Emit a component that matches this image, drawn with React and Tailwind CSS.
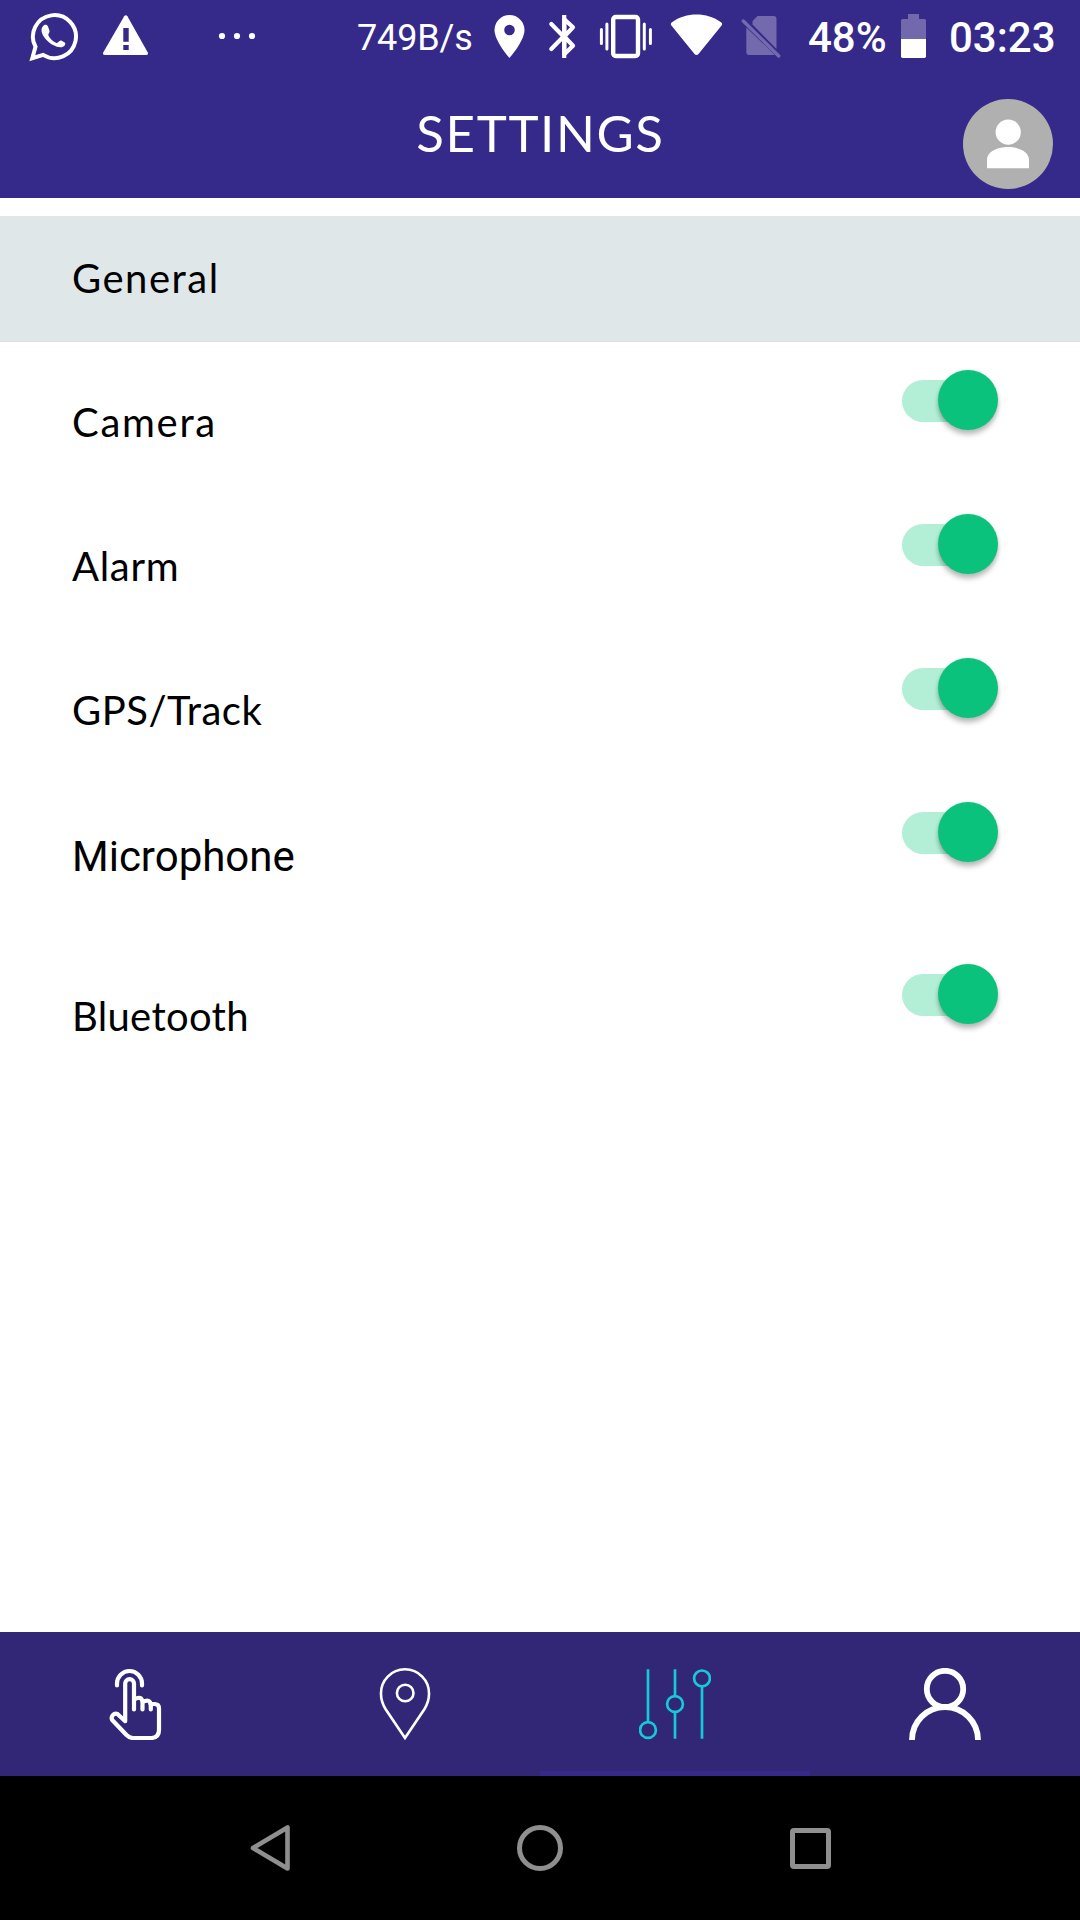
const ROWS = [
  { label: "Camera", tracking: "tracking-[1.7px]" },
  { label: "Alarm", tracking: "tracking-[0.7px]" },
  { label: "GPS/Track", tracking: "tracking-[0.5px]" },
  { label: "Microphone", roboto: true, tall: true },
  { label: "Bluetooth", tracking: "tracking-[0.3px]" },
];

function StatusBar() {
  return (
    <div className="flex h-[72px] items-center font-['Roboto',sans-serif] text-white">
      <svg className="ml-[28px] h-[72px] w-[54px]" viewBox="28.5 0 54 72" fill="none">
        <path d="M32.8 58.2 L36 46.8 A21.5 21.5 0 1 1 43.6 54.9 Z" stroke="#fff" strokeWidth="4" />
        <path fill="#fff" d="M43.5 26.2C45 24.4 47.6 24.3 48.5 26.6L50 30.8C50.6 32.8 48.3 33.8 48.8 35.3C50.5 38.9 53.6 41.8 57 43C58.8 43.4 59.5 40 61.7 40.6L65.2 42.4C66.9 43.6 64.8 47.3 60.8 47.3C52 46.9 42 37 42 30.3C42 28.5 42.5 27.2 43.5 26.2Z" />
      </svg>
      <svg className="ml-[18px] h-[72px] w-[52px]" viewBox="100 0 52 72">
        <path fill="#fff" d="M124.200 16.300q1.600-2 3.200 0L147.800 52.500q.8 2.500-1.800 2.500H105q-2.600 0-1.800-2.500Z" />
        <path fill="#352989" d="M123.300 28h5.400v13.700h-5.400ZM123.300 45h5.400v5h-5.400Z" />
      </svg>
      <svg className="ml-[66px] h-[72px] w-[38px]" viewBox="218 0 38 72" fill="#fff">
        <circle cx="222" cy="36" r="3.100" />
        <circle cx="237" cy="36" r="3.100" />
        <circle cx="252" cy="36" r="3.100" />
      </svg>
      <span className="ml-[101px] mt-[4px] w-[135px] whitespace-nowrap text-[36px] leading-[72px] tracking-[-0.15px]">749B/s</span>
      <svg className="h-[72px] w-[34px]" viewBox="492 0 34 72">
        <path fill="#fff" fillRule="evenodd" d="M509.500 15A15 15 0 0 0 494.500 30C494.500 41 509.500 58 509.500 58S524.500 41 524.500 30A15 15 0 0 0 509.500 15ZM509.500 24.700a5.300 5.300 0 1 1 0 10.600a5.300 5.300 0 1 1 0-10.600Z" />
      </svg>
      <svg className="ml-[20px] h-[72px] w-[34px]" viewBox="546 0 34 72" fill="none" stroke="#fff" strokeWidth="4.200">
        <path strokeLinecap="round" d="M551.300 24L563.500 36.500L551.300 49" />
        <path strokeLinejoin="round" d="M564.300 36V19.200L573 27.200L564.300 36.500L573 45.800L564.300 54.300V36" />
        <path d="M564.200 15v43" />
      </svg>
      <svg className="ml-[18px] h-[72px] w-[58px]" viewBox="598 0 58 72" fill="none" stroke="#fff">
        <rect x="613.200" y="17" width="24.800" height="39" rx="2.500" strokeWidth="4.400" />
        <path strokeWidth="3" strokeLinecap="round" d="M601.400 29.500v14M606.900 24v25M644.300 24v25M650.400 29.500v14" />
      </svg>
      <svg className="ml-[12px] h-[72px] w-[58px]" viewBox="668 0 58 72">
        <path fill="#fff" d="M671.800 26Q669.800 24 672 22.300C686 12 707 12 721 22.300Q723.200 24 721.200 26L698.500 54Q696.500 56 694.500 54Z" />
      </svg>
      <svg className="ml-[12px] h-[72px] w-[48px]" viewBox="738 0 48 72" fill="#fff" opacity=".3">
        <path d="M757.500 16H773.500Q776.500 16 776.500 19V49L752.500 24.500V21Z" />
        <path d="M746.300 27.500V52Q746.300 55 749.300 55H773Q774 55 774.500 54.500Z" />
        <path d="M743.300 21L778.700 56" stroke="#fff" strokeWidth="3.400" strokeLinecap="round" />
      </svg>
      <span className="ml-[22px] mt-[3px] w-[92px] whitespace-nowrap text-[42px] font-medium leading-[72px]">48%</span>
      <svg className="h-[72px] w-[28px]" viewBox="900 0 28 72" fill="#fff">
        <path opacity=".3" d="M901 39V20.500Q901 19 902.500 19H908V14h11v5h5.500Q926 19 926 20.500V39Z" />
        <path d="M901 39h25v17.300q0 1.700-1.700 1.700H902.700q-1.700 0-1.700-1.700Z" />
      </svg>
      <span className="ml-[21px] mt-[3px] whitespace-nowrap text-[42px] font-medium leading-[72px]">03:23</span>
    </div>
  );
}

function Header() {
  return (
    <header className="grid h-[126px] grid-cols-[1fr_auto_1fr]">
      <h1 className="col-start-2 -mr-[1px] mt-[25px] whitespace-nowrap text-[51px] leading-[72px] tracking-[1.6px] text-white">SETTINGS</h1>
      <svg className="mr-[27px] mt-[27px] size-[90px] justify-self-end" viewBox="0 0 90 90">
        <circle cx="45" cy="45" r="45" fill="#b1b0b0" />
        <circle cx="45.200" cy="33.200" r="12.600" fill="#fff" />
        <path fill="#fff" d="M24 69.300V61C24 52 35 48 45 48S66 52 66 61V69.300Z" />
      </svg>
    </header>
  );
}

function Toggle() {
  return (
    <button role="switch" aria-checked="true" className="flex h-[42px] w-[96px] items-center justify-end rounded-full bg-[linear-gradient(to_right,#b3efd7_80px,transparent_80px)] pr-[0.5px]">
      <span className="mb-[2px] size-[60px] shrink-0 rounded-full bg-[#0ac27b] shadow-[0_5px_5px_rgba(0,0,0,0.22),0_1px_4px_rgba(0,0,0,0.12)]" />
    </button>
  );
}

function TabBar() {
  return (
    <nav className="grid h-[144px] grid-cols-4 bg-[#322677]">
      <div className="flex items-center justify-center">
        <svg className="size-[72px]" viewBox="0 0 72 72" fill="none" stroke="#fff" strokeWidth="4.200" strokeLinecap="round" strokeLinejoin="round">
          <path d="M18 17.500V15.500a12.500 12.500 0 0 1 25 0V17.500" />
          <path d="M35 41.500V15.500a4.400 4.400 0 0 0-8.800 0V53.200L18.500 46A4.300 4.300 0 0 0 13.200 52L27.500 67Q30.500 70 34 70H52.500Q60 69.500 60 62V40Q60 36 55.500 36H51.500" />
          <path d="M35 31.500Q43 27 43.500 34.500V41.500M43.500 34Q51.500 30 51.800 37.500V41.500" />
        </svg>
      </div>
      <div className="flex items-center justify-center">
        <svg className="size-[72px]" viewBox="0 0 72 72" fill="none" stroke="#fff" strokeWidth="2.600">
          <path d="M36 1.300A24 24 0 0 0 12 26C12 32 13.500 36 16.500 41L36 70L55.500 41C58.500 36 60 32 60 26A24 24 0 0 0 36 1.300Z" />
          <circle cx="36.200" cy="25" r="8.300" />
        </svg>
      </div>
      <div className="flex items-center justify-center border-b-[5px] border-[#37298c] pt-[5px]">
        <svg className="size-[72px]" viewBox="0 0 72 72" fill="none" stroke="#17c8d8" strokeWidth="2.700">
          <path d="M9 1.300V53.800M36 1.300V28M36 44V70.700M63 18.700V70.700" />
          <circle cx="9" cy="62" r="7.900" />
          <circle cx="36" cy="36" r="7.900" />
          <circle cx="63" cy="10.400" r="7.900" />
        </svg>
      </div>
      <div className="flex items-center justify-center">
        <svg className="size-[72px]" viewBox="0 0 72 72" fill="none" stroke="#fff" strokeWidth="5.800">
          <circle cx="36" cy="21" r="18.200" />
          <path d="M3 72A33 33 0 0 1 69 72" />
        </svg>
      </div>
    </nav>
  );
}

function SystemNav() {
  return (
    <div className="grid h-[144px] grid-cols-3 items-center justify-items-center bg-black px-[135px]">
      <svg className="size-[48px]" viewBox="0 0 48 48" fill="none" stroke="#8f8f8f" strokeWidth="4.600" strokeLinejoin="round">
        <path d="M41.500 3.500V44.500L7 24Z" />
      </svg>
      <span className="size-[46px] rounded-full border-[5px] border-[#8f8f8f]" />
      <span className="size-[41px] rounded-[4px] border-[5px] border-[#8f8f8f]" />
    </div>
  );
}

export default function App() {
  return (
    <div className="flex h-[1920px] w-[1080px] flex-col overflow-hidden bg-white font-['Lato',sans-serif] text-black">
      <div className="bg-[#352989]">
        <StatusBar />
        <Header />
      </div>
      <main className="flex-1 pt-[18px]">
        <h2 className="h-[126px] border-b border-[#dcdfe4] bg-[#e0e7e8] pl-[72px] pt-[26px] text-[40px] leading-[72px] tracking-[1.5px]">General</h2>
        {ROWS.map((row) => (
          <div key={row.label} className={row.tall ? "flex h-[162px] justify-between pl-[72px] pr-[82px]" : "flex h-[144px] justify-between pl-[72px] pr-[82px]"}>
            <span
              className={
                row.roboto
                  ? "mt-[47px] font-['Roboto',sans-serif] text-[42px] leading-[72px]"
                  : `mt-[44px] text-[40px] leading-[72px] ${row.tracking}`
              }
            >
              {row.label}
            </span>
            <div className="mt-[38px]">
              <Toggle />
            </div>
          </div>
        ))}
      </main>
      <TabBar />
      <SystemNav />
    </div>
  );
}
